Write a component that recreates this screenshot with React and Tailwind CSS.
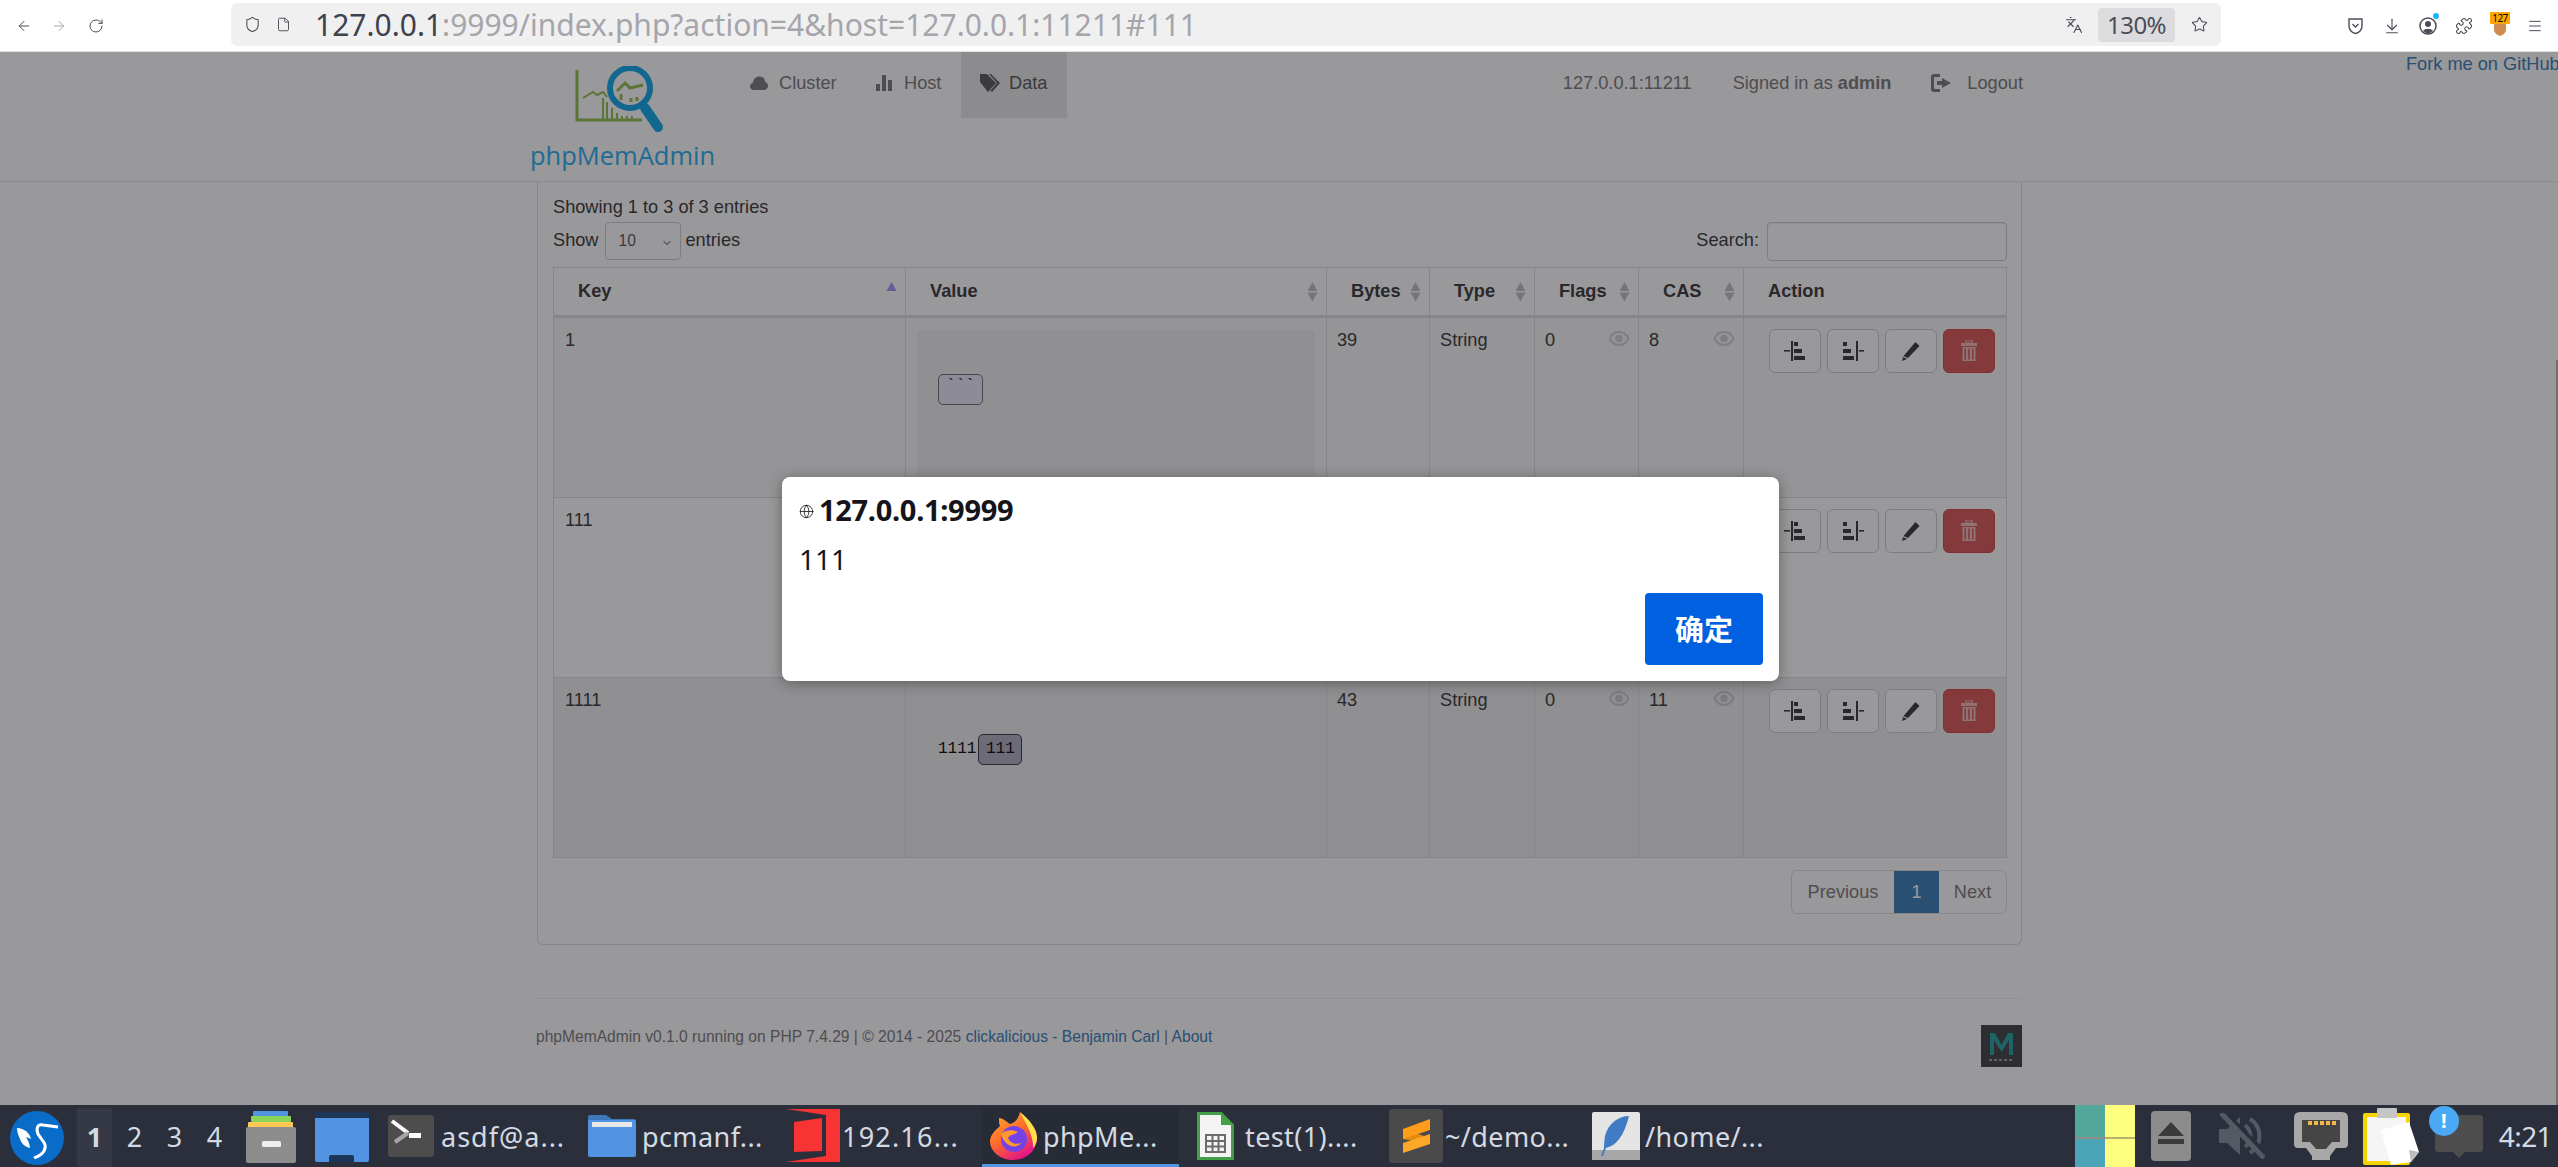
import { ArrowLeft, ArrowRight, RotateCw, Shield, File, Star, Languages, ArrowDownToLine, Puzzle, Menu, ChevronDown, Globe } from "lucide-react";

const sans = "font-['Liberation_Sans',Arial,sans-serif]";
const ui = "font-['Noto_Sans','Noto_Sans_CJK_SC',sans-serif]";

function SortArrows({ active }) {
  return (
    <svg width="11" height="20" viewBox="0 0 11 20" className="shrink-0">
      <path d="M5.5 0 L10.5 9 H0.5 Z" fill={active ? "#9a9aff" : "#bdbdbd"} />
      {!active && <path d="M5.5 19.5 L10.5 10.5 H0.5 Z" fill="#bdbdbd" />}
    </svg>
  );
}

function EyeIcon() {
  return (
    <svg width="20" height="15" viewBox="0 0 20 15" className="shrink-0 opacity-30">
      <path d="M10 1 C5 1 2 4.500 0.500 7.500 C2 10.500 5 14 10 14 C15 14 18 10.500 19.500 7.500 C18 4.500 15 1 10 1 Z" fill="none" stroke="#777" strokeWidth="2" />
      <circle cx="10" cy="7.500" r="3.800" fill="#777" />
    </svg>
  );
}

function AlignLeftIcon() {
  return (
    <svg width="22" height="20" viewBox="0 0 22 20">
      <rect x="7" y="0" width="2" height="20" fill="#333" />
      <rect x="0" y="9" width="6" height="1.600" fill="#333" />
      <rect x="10" y="1" width="4" height="4" fill="#333" />
      <rect x="10" y="8" width="8" height="4" fill="#333" />
      <rect x="10" y="15" width="11" height="4" fill="#333" />
    </svg>
  );
}

function AlignRightIcon() {
  return (
    <svg width="22" height="20" viewBox="0 0 22 20">
      <rect x="14" y="0" width="2" height="20" fill="#333" />
      <rect x="17" y="9" width="5" height="1.600" fill="#333" />
      <rect x="1" y="1" width="4" height="4" fill="#333" />
      <rect x="1" y="8" width="8" height="4" fill="#333" />
      <rect x="1" y="15" width="11" height="4" fill="#333" />
    </svg>
  );
}

function PencilIcon() {
  return (
    <svg width="20" height="20" viewBox="0 0 20 20">
      <path d="M14.500 1 L18.500 5 L7 17 L2.500 15 Z" fill="#333" />
      <path d="M2 16 L6 18 L1 20 Z" fill="#333" />
    </svg>
  );
}

function TrashIcon() {
  return (
    <svg width="18" height="22" viewBox="0 0 18 22" fill="#fff" className="opacity-60">
      <rect x="6" y="0" width="6" height="3" fill="none" stroke="#fff" strokeWidth="1.200" />
      <rect x="1" y="3" width="16" height="3" />
      <path d="M2.500 7 H15.500 V21 H2.500 Z M4.500 8.500 V19.500 H6 V8.500 Z M8.200 8.500 V19.500 H9.800 V8.500 Z M12 8.500 V19.500 H13.500 V8.500 Z" fillRule="evenodd" />
    </svg>
  );
}

function ActionButtons() {
  return (
    <div className="flex gap-[6px]">
      <button className="w-[52px] h-[44px] flex items-center justify-center bg-white border border-[#ccc] rounded-[6px]"><AlignLeftIcon /></button>
      <button className="w-[52px] h-[44px] flex items-center justify-center bg-white border border-[#ccc] rounded-[6px]"><AlignRightIcon /></button>
      <button className="w-[52px] h-[44px] flex items-center justify-center bg-white border border-[#ccc] rounded-[6px]"><PencilIcon /></button>
      <button className="w-[52px] h-[44px] flex items-center justify-center bg-[#d9534f] border border-[#d43f3a] rounded-[6px]"><TrashIcon /></button>
    </div>
  );
}

function Row({ k, bytes, cas, rowBg, preBg, children }) {
  return (
    <tr className={`h-[180px] ${rowBg}`}>
      <td className="border border-[#ddd] align-top pl-[11px] pt-[9px]">{k}</td>
      <td className="border border-[#ddd] align-top p-[11px]">
        <div className={`h-[157px] rounded-[6px] pl-[21px] pt-[45px] ${preBg} font-['Liberation_Mono',monospace] text-[16px] text-black`}>
          {children}
        </div>
      </td>
      <td className="border border-[#ddd] align-top pl-[10px] pt-[9px]">{bytes}</td>
      <td className="border border-[#ddd] align-top pl-[10px] pt-[9px]">String</td>
      <td className="border border-[#ddd] align-top pl-[10px] pr-[9px] pt-[9px]">
        <div className="flex justify-between items-start"><span>0</span><span className="pt-[4px]"><EyeIcon /></span></div>
      </td>
      <td className="border border-[#ddd] align-top pl-[10px] pr-[9px] pt-[9px]">
        <div className="flex justify-between items-start"><span>{cas}</span><span className="pt-[4px]"><EyeIcon /></span></div>
      </td>
      <td className="border border-[#ddd] align-top pl-[25px] pt-[11px]"><ActionButtons /></td>
    </tr>
  );
}

function HeadCell({ label, active, plain }) {
  return (
    <th className="border border-[#ddd] border-b-[3px] text-left font-bold pl-[24px] pr-[8px]">
      <div className="flex justify-between items-center">
        <span className="mt-[-2px]">{label}</span>
        {!plain && <SortArrows active={active} />}
      </div>
    </th>
  );
}

function Logo() {
  return (
    <svg width="96" height="70" viewBox="570 66 96 70" className="self-center ml-[-8px]">
      <path d="M577 70 V120 H642" fill="none" stroke="#8fc04a" strokeWidth="3" />
      <path d="M583 98 L593 92 L597 95 L603 92 L607 97" fill="none" stroke="#8fc04a" strokeWidth="2" />
      <path d="M603 98 V119 M607 102 V119 M612 108 V119 M617 113 V119 M622 116 V119 M627 116 V119 M632 116 V119" stroke="#8fc04a" strokeWidth="2" />
      <path d="M617 91 L625 83 L630 88 L643 85" fill="none" stroke="#8fc04a" strokeWidth="3" />
      <path d="M621 94 V100 M631 98 V102 M637 97 V101" stroke="#8fc04a" strokeWidth="3" />
      <circle cx="630" cy="88" r="20" fill="none" stroke="#0aa6ea" strokeWidth="6" />
      <path d="M645 108 L658 127" stroke="#0aa6ea" strokeWidth="10" strokeLinecap="round" />
    </svg>
  );
}

function Toolbar() {
  return (
    <div className={`h-[52px] shrink-0 bg-white border-b border-[#e0e0e2] flex items-center ${ui}`}>
      <div className="w-[231px] shrink-0 flex items-center pl-[16px] text-[#4a4d57]">
        <ArrowLeft size={16} strokeWidth={1.500} />
        <ArrowRight size={16} strokeWidth={1.500} className="ml-[19px] text-[#a9a9ad]" />
        <RotateCw size={16} strokeWidth={1.500} className="ml-[21px]" />
      </div>
      <div className="w-[1990px] h-[43px] mb-[2px] bg-[#f0f0f1] rounded-[6px] flex items-center text-[#4a4d57]">
        <Shield size={17} strokeWidth={1.500} className="ml-[13px]" />
        <File size={15} strokeWidth={1.500} className="ml-[15px]" />
        <div className="ml-[24px] text-[30px] leading-none whitespace-nowrap">
          <span className="text-[#3f424d]">127.0.0.1</span><span className="text-[#a5a5ab]">:9999/index.php?action=4&amp;host=127.0.0.1:11211#111</span>
        </div>
        <div className="ml-auto flex items-center">
          <Languages size={18} strokeWidth={1.500} />
          <div className="ml-[15px] w-[77px] h-[34px] bg-[#dcdcdf] rounded-[4px] flex items-center justify-center text-[24px] tracking-[-0.5px]">130%</div>
          <Star size={17} strokeWidth={1.500} className="ml-[16px] mr-[13px]" />
        </div>
      </div>
      <div className="flex-1 flex items-center pl-[126px] text-[#4a4d57] relative">
        <svg width="17" height="18" viewBox="0 0 17 18" fill="none" stroke="currentColor" strokeWidth="1.400">
          <path d="M2 2 H15 V9 C15 13 12 16 8.500 16.500 C5 16 2 13 2 9 Z" />
          <path d="M5.500 7 L8.500 10 L11.500 7" />
        </svg>
        <ArrowDownToLine size={18} strokeWidth={1.500} className="ml-[19px]" />
        <div className="relative ml-[18px]">
          <svg width="18" height="20" viewBox="0 0 18 20">
            <circle cx="9" cy="10" r="8" fill="none" stroke="currentColor" strokeWidth="1.500" />
            <circle cx="9" cy="8" r="3" fill="currentColor" />
            <path d="M4 15 C6 12 12 12 14 15 L9 18 Z" fill="currentColor" />
          </svg>
          <span className="absolute top-[-3px] right-[-2px] w-[6px] h-[6px] rounded-full bg-[#12b8ff]" />
        </div>
        <Puzzle size={18} strokeWidth={1.500} className="ml-[18px]" />
        <div className="relative ml-[17px] w-[20px] h-[20px]">
          <svg width="14" height="20" viewBox="0 0 14 20" className="ml-[3px] mt-[4px]"><path d="M1 2 H13 V9 C13 13 10 15 7 16 C4 15 1 13 1 9 Z" fill="#d08a50" /></svg>
          <span className="absolute top-[-4px] left-0 w-[20px] h-[12px] bg-[#ffa500] text-black text-[10px] leading-[12px] text-center tracking-[-0.5px] rounded-[1px]">127</span>
        </div>
        <Menu size={16} strokeWidth={1.500} className="ml-[17px]" />
      </div>
    </div>
  );
}

function TaskText({ children, className }) {
  return <span className={`text-[27px] leading-none whitespace-nowrap text-[#d3dae3] tracking-[0.4px] ${className || ""}`}>{children}</span>;
}

function Taskbar() {
  return (
    <div className={`h-[62px] shrink-0 bg-[#2b2f3b] flex items-stretch pl-[10px] ${ui} overflow-hidden`}>
      {/* start menu */}
      <svg width="54" height="54" viewBox="0 0 54 54" className="self-center mt-[3px] shrink-0">
        <circle cx="27" cy="27" r="27" fill="#0a6cc9" />
        <path d="M48 16 L33 14 C27 13 26 18 28 23 C32 30 38 33 34 40 C31 45 26 46 24 47" fill="none" stroke="#fff" strokeWidth="3" />
        <path d="M7 17 C14 17 20 22 21 28 L16 26 C18 30 20 33 20 37 C15 36 11 32 10 28 C8 24 7 20 7 17 Z" fill="#fff" />
      </svg>
      {/* pager */}
      <div className="ml-[13px] mt-[3px] flex gap-[5px] shrink-0">
        <div className="w-[35px] bg-[#353945] flex items-center justify-center text-[27px] font-bold text-[#d3dae3]">1</div>
        <div className="w-[35px] flex items-center justify-center text-[27px] text-[#d3dae3]">2</div>
        <div className="w-[35px] flex items-center justify-center text-[27px] text-[#d3dae3]">3</div>
        <div className="w-[35px] flex items-center justify-center text-[27px] text-[#d3dae3]">4</div>
      </div>
      {/* file cabinet */}
      <svg width="51" height="54" viewBox="246 1110 51 54" className="ml-[14px] mt-[5px] shrink-0">
        <rect x="253" y="1111" width="35" height="6" rx="1" fill="#5294e2" />
        <rect x="251" y="1116" width="40" height="6" rx="1" fill="#8bd45a" />
        <rect x="248" y="1122" width="45" height="6" rx="1" fill="#ffc857" />
        <rect x="246" y="1127" width="50" height="36" rx="2" fill="#8d8d8d" />
        <rect x="262" y="1141" width="19" height="6" rx="1.500" fill="#eee" />
      </svg>
      {/* tray */}
      <svg width="54" height="50" viewBox="315 1112 54 50" className="ml-[18px] mt-[7px] shrink-0">
        <rect x="315" y="1112" width="54" height="50" rx="2" fill="#5294e2" />
        <rect x="315" y="1112" width="54" height="6" fill="#1d3557" />
        <path d="M329 1162 V1157 Q329 1155 331 1155 H352 Q354 1155 354 1157 V1162 Z" fill="#1d3557" />
      </svg>
      {/* terminal */}
      <div className="ml-[19px] flex items-center shrink-0 w-[180px]">
        <svg width="46" height="42" viewBox="388 1116 46 42" className="shrink-0">
          <rect x="388" y="1116" width="46" height="42" rx="3" fill="#4d4d4d" />
          <path d="M392 1122 L408 1134" stroke="#fff" strokeWidth="4" fill="none" />
          <path d="M408 1134 L395 1143" stroke="#a5a5a5" strokeWidth="4" fill="none" />
          <rect x="409" y="1134" width="12" height="5" fill="#fff" />
        </svg>
        <TaskText className="ml-[7px] tracking-[1px]">asdf@a...</TaskText>
      </div>
      {/* pcmanfm */}
      <div className="ml-[20px] flex items-center shrink-0 w-[179px]">
        <svg width="48" height="42" viewBox="588 1116 48 42" className="shrink-0">
          <path d="M588 1118 Q588 1116 590 1116 H606 L612 1120 H634 Q636 1120 636 1122 V1130 H588 Z" fill="#3f77bb" />
          <rect x="588" y="1121" width="48" height="37" rx="2" fill="#5294e2" />
          <rect x="592" y="1123" width="40" height="5" fill="#e8e8e8" />
        </svg>
        <TaskText className="ml-[6px]">pcmanf...</TaskText>
      </div>
      {/* red door */}
      <div className="ml-[19px] flex items-center shrink-0 w-[176px]">
        <svg width="54" height="54" viewBox="786 1110 54 54" className="shrink-0">
          <path d="M786 1110 H840 V1163 H786 L826 1157 V1116 Z" fill="#f73333" />
          <path d="M794 1123 L822 1119 V1152 L794 1153 Z" fill="#f73333" />
        </svg>
        <TaskText className="ml-[2px] tracking-[1.2px]">192.16...</TaskText>
      </div>
      {/* firefox, active */}
      <div className="ml-[20px] w-[197px] mt-[3px] bg-[#272b36] border-b-[3px] border-[#5294e2] flex items-center pl-[8px] shrink-0">
        <svg width="47" height="48" viewBox="0 0 47 48" className="shrink-0">
          <defs>
            <linearGradient id="ffa" x1="0" y1="0" x2="0.600" y2="1">
              <stop offset="0" stopColor="#ffb02e" />
              <stop offset="0.550" stopColor="#ff6a2a" />
              <stop offset="1" stopColor="#e31587" />
            </linearGradient>
          </defs>
          <path d="M30 0 C28 7 26 10 20 12 C16 9 12 6 9 6 C9 10 9 12 10 14 C3 20 0 25 0 29 C0 40 11 48 23 48 C36 48 47 39 47 26 C47 14 36 10 30 0 Z" fill="url(#ffa)" />
          <path d="M30 0 C40 8 47 17 47 26 C47 30 45 34 43 36 C44 24 36 12 30 0 Z" fill="#ffe14d" />
          <circle cx="24" cy="27" r="13" fill="#7542e5" />
          <path d="M11 22 C15 18 22 17 28 20 C24 23 20 22 18 26 C20 31 26 33 31 31 C27 37 15 36 11 22 Z" fill="#ff9a2e" />
        </svg>
        <TaskText className="ml-[6px]">phpMe...</TaskText>
      </div>
      {/* calc */}
      <div className="ml-[18px] flex items-center shrink-0 w-[180px]">
        <svg width="37" height="48" viewBox="0 0 37 48" className="shrink-0">
          <path d="M1.500 1.500 H24 L35.500 13 V46.500 H1.500 Z" fill="#f4f4f4" stroke="#43a047" strokeWidth="3" />
          <path d="M24 1.500 L35.500 13 H24 Z" fill="#43a047" />
          <path d="M9 23 H28 V40 H9 Z M9 29 H28 M9 34.500 H28 M15.500 23 V40 M21.500 23 V40" fill="none" stroke="#6b6b6b" strokeWidth="2" />
        </svg>
        <TaskText className="ml-[11px]">test(1)....</TaskText>
      </div>
      {/* sublime */}
      <div className="ml-[12px] flex items-center shrink-0 w-[195px]">
        <svg width="54" height="54" viewBox="0 0 54 54" className="shrink-0">
          <rect width="54" height="54" rx="4" fill="#4a4a4a" />
          <path d="M14 20 L41 29 V35 L14 30 Z" fill="#e58a12" />
          <path d="M41 10 V21 L14 30 V20 Z" fill="#ff9c1a" />
          <path d="M14 34 L41 25 V35 L14 44 Z" fill="#ffa726" />
        </svg>
        <TaskText className="ml-[2px]">~/demo...</TaskText>
      </div>
      {/* leafpad */}
      <div className="ml-[8px] flex items-center shrink-0">
        <svg width="48" height="48" viewBox="0 0 48 48" className="shrink-0">
          <rect width="48" height="48" rx="2" fill="#e4e4e4" />
          <rect y="38" width="48" height="10" fill="#a7a7a7" />
          <path d="M37 4 C26 4 16 12 13 24 C12 30 12 34 12 36 L9 44 L11 44 L14 36 C24 34 32 24 37 4 Z" fill="#3f7cc4" />
        </svg>
        <TaskText className="ml-[5px]">/home/...</TaskText>
      </div>
      {/* tray */}
      <div className="ml-auto flex shrink-0 items-stretch">
        <div className="flex">
          <div className="w-[30px] flex flex-col">
            <div className="h-[32px] bg-[#54a89b]" />
            <div className="flex-1 bg-[#4ba4b8] border-t-[2px] border-[#8f8f88]" />
          </div>
          <div className="w-[30px] flex flex-col">
            <div className="h-[32px] bg-[#ffff7f]" />
            <div className="flex-1 bg-[#ffff7f] border-t-[2px] border-[#b3b36c]" />
          </div>
        </div>
        <svg width="40" height="50" viewBox="0 0 40 50" className="ml-[16px] self-center shrink-0">
          <rect width="40" height="50" rx="4" fill="#8c8c8c" />
          <path d="M20 11 L33 25 H7 Z M7 28 H33 V33 H7 Z" fill="#3a3a3a" />
        </svg>
        <svg width="46" height="46" viewBox="0 0 46 46" className="ml-[28px] self-center shrink-0">
          <path d="M0 16 H8 L21 4 V42 L8 30 H0 Z" fill="#555963" />
          <path d="M26 12 A14 14 0 0 1 26 34 M31 6 A20 20 0 0 1 31 40" fill="none" stroke="#555963" strokeWidth="4" />
          <path d="M5 -2 L48 42" stroke="#2b2f3b" strokeWidth="4" />
          <path d="M2 0 L45 45" stroke="#555963" strokeWidth="5" />
        </svg>
        <svg width="54" height="48" viewBox="0 0 54 48" className="ml-[29px] self-center shrink-0">
          <path d="M6 0 H48 Q54 0 54 6 V32 Q54 36 50 36 H42 L36 44 L36 48 H18 L18 44 L12 36 H4 Q0 36 0 32 V6 Q0 0 6 0 Z" fill="#a8a8a8" />
          <path d="M8 8 H46 V30 H38 L32 37 H22 L16 30 H8 Z" fill="#454545" />
          <path d="M14 9 H18 V13 H14 Z M20 9 H24 V13 H20 Z M26 9 H30 V13 H26 Z M32 9 H36 V13 H32 Z M38 9 H42 V13 H38 Z" fill="#f2b84b" />
        </svg>
        <svg width="56" height="60" viewBox="0 0 56 60" className="ml-[15px] self-center shrink-0">
          <rect x="0" y="7" width="47" height="52" rx="2" fill="#f5d400" />
          <rect x="4" y="11" width="39" height="44" fill="#f5f5f5" />
          <rect x="14" y="2" width="20" height="10" rx="1" fill="#c5c5c5" />
          <path d="M18 24 L46 16 L56 46 L48 56 L28 59 Z" fill="#fff" />
          <path d="M48 56 L56 46 L46 44 Z" fill="#bdbdbd" />
        </svg>
        <div className="relative ml-[16px] self-center">
          <svg width="48" height="44" viewBox="0 0 48 44" className="shrink-0 mt-[2px]">
            <path d="M3 0 H45 Q48 0 48 3 V34 Q48 37 45 37 H30 L24 43 L18 37 H3 Q0 37 0 34 V3 Q0 0 3 0 Z" fill="#4d4d4d" />
          </svg>
          <div className="absolute top-[-7px] left-[-6px] w-[30px] h-[30px] rounded-full bg-[#4aa8f5] flex items-center justify-center text-white text-[20px] font-bold leading-none">!</div>
        </div>
        <span className="ml-[16px] mr-[6px] self-center text-[28px] leading-none text-[#d3dae3] tracking-[-0.6px]">4:21</span>
      </div>
    </div>
  );
}

function AlertDialog() {
  return (
    <div className={`absolute top-[425px] left-[782px] w-[997px] h-[204px] bg-white rounded-[8px] shadow-[0_2px_14px_rgba(0,0,0,0.35)] z-20 pl-[17px] pr-[16px] pt-[14px] pb-[16px] flex flex-col text-[#15141a] ${ui}`}>
      <div className="flex items-center h-[36px]">
        <Globe size={15} strokeWidth={1.300} className="mt-[5px]" />
        <span className="ml-[5px] text-[29px] font-bold leading-none tracking-[-0.3px]">127.0.0.1:9999</span>
      </div>
      <div className="mt-[18px] text-[28px] leading-none">111</div>
      <div className="mt-auto flex justify-end">
        <button className="w-[118px] h-[72px] bg-[#0060df] text-white rounded-[4px] text-[29px] font-bold font-['Noto_Sans_CJK_SC',sans-serif]">确定</button>
      </div>
    </div>
  );
}

function PageContent() {
  return (
    <div className={`${sans} text-[18.2px] leading-[26px] text-[#333]`}>
      <div className="h-[130px] border-b border-[#e7e7e7]">
        <div className="ml-[537px] w-[1485px] flex">
          <div className="w-[184px] ml-[-7px] flex flex-col pt-[14px]">
            <Logo />
            <div className="mt-[3px] font-['Open_Sans',sans-serif] font-medium text-[25.5px] leading-[32px] text-[#22aef0] whitespace-nowrap">phpMemAdmin</div>
          </div>
          <div className="ml-[16px] flex h-[66px] text-[#777]">
            <div className="w-[126px] pl-[20px] flex items-center pb-[4px]">
              <svg width="18" height="14" viewBox="0 0 18 14" fill="currentColor" className="shrink-0"><path d="M4 14 C1.500 14 0 12.300 0 10.300 C0 8.500 1.200 7 3 6.700 C3.300 3 6 0.500 9.500 0.500 C13 0.500 15 3 15.300 6 C17 6.500 18 8 18 10 C18 12.300 16.300 14 14 14 Z" /></svg>
              <span className="ml-[11px]">Cluster</span>
            </div>
            <div className="w-[105px] pl-[20px] flex items-center pb-[4px]">
              <svg width="16" height="16" viewBox="0 0 16 16" fill="currentColor" className="shrink-0"><path d="M0 9 H4 V16 H0 Z M6 0 H10 V16 H6 Z M12 5 H16 V16 H12 Z" /></svg>
              <span className="ml-[12px]">Host</span>
            </div>
            <div className="w-[106px] pl-[19px] flex items-center pb-[4px] bg-[#e7e7e7] text-[#555]">
              <svg width="20" height="18" viewBox="0 0 20 18" fill="currentColor" className="shrink-0"><path d="M0 0 H7 L16 9 L8 18 L0 8 Z M9 0 H11 L20 9 L12 18 L10.500 16.500 L17 9 Z" /></svg>
              <span className="ml-[9px]">Data</span>
            </div>
          </div>
          <div className="ml-auto mr-[-1px] flex h-[66px] items-center pb-[4px] text-[#777]">
            <span>127.0.0.1:11211</span>
            <span className="ml-[41px]">Signed in as <b>admin</b></span>
            <svg width="20" height="18" viewBox="0 0 20 18" fill="currentColor" className="ml-[40px] shrink-0"><path d="M9 0 H3 Q0 0 0 3 V15 Q0 18 3 18 H9 V15 H4 Q3 15 3 14 V4 Q3 3 4 3 H9 Z M11 4 L20 9 L11 14 V11 H6 V7 H11 Z" /></svg>
            <span className="ml-[16px]">Logout</span>
          </div>
        </div>
      </div>

      <div className="ml-[537px] w-[1485px] h-[763px] border border-t-0 border-[#ddd] rounded-b-[6px] pl-[15px] pr-[15px]">
        <div className="pt-[12px] h-[39px]">Showing 1 to 3 of 3 entries</div>
        <div className="flex items-start h-[46px] pt-[1px]">
          <span className="pt-[5px]">Show</span>
          <div className="ml-[6px] w-[76px] h-[38px] border border-[#ccc] rounded-[4px] bg-white flex items-center justify-between pl-[13px] pr-[7px] text-[15.6px] text-[#555]">
            10<ChevronDown size={12} strokeWidth={2} className="text-[#222] mt-[3px]" />
          </div>
          <span className="ml-[5px] pt-[5px]">entries</span>
          <span className="ml-auto pt-[5px]">Search:</span>
          <div className="ml-[8px] w-[240px] h-[39px] border border-[#ccc] rounded-[4px] bg-white shadow-[inset_0_1px_1px_rgba(0,0,0,0.075)] mr-[-1px]" />
        </div>
        <table className="w-[1453px] table-fixed border-collapse">
          <colgroup>
            <col className="w-[352px]" />
            <col className="w-[421px]" />
            <col className="w-[103px]" />
            <col className="w-[105px]" />
            <col className="w-[104px]" />
            <col className="w-[105px]" />
            <col className="w-[263px]" />
          </colgroup>
          <thead>
            <tr className="h-[49px]">
              <HeadCell label="Key" active />
              <HeadCell label="Value" />
              <HeadCell label="Bytes" />
              <HeadCell label="Type" />
              <HeadCell label="Flags" />
              <HeadCell label="CAS" />
              <HeadCell label="Action" plain />
            </tr>
          </thead>
          <tbody>
            <Row k="1" bytes="39" cas="8" rowBg="bg-[#f7f7f7]" preBg="bg-[#efefef]">
              <span className="inline-block w-[45px] h-[31px] align-top rounded-[5px] border border-[#6a6a78] bg-[#e9e8f5] text-center leading-[22px]">```</span>
            </Row>
            <Row k="111" bytes="41" cas="9" rowBg="bg-white" preBg="bg-[#efefef]" />
            <Row k="1111" bytes="43" cas="11" rowBg="bg-[#efefef]" preBg="bg-[#efefef]">
              <span className="inline-block leading-[31px] align-top">1111</span>
              <span className="inline-block ml-[2px] w-[44px] h-[31px] align-top rounded-[5px] border border-[#33333d] bg-[#aeadbd] text-center leading-[29px]">111</span>
            </Row>
          </tbody>
        </table>
        <div className="mt-[12px] flex justify-end mr-[-1px]">
          <div className="h-[44px] flex border border-[#ddd] rounded-[6px] bg-white text-[#777] overflow-hidden">
            <span className="w-[102px] flex items-center justify-center">Previous</span>
            <span className="w-[45px] flex items-center justify-center bg-[#337ab7] text-white">1</span>
            <span className="w-[67px] flex items-center justify-center">Next</span>
          </div>
        </div>
      </div>

      <div className="ml-[537px] w-[1485px] mt-[53px] border-t border-[#eee] pt-[26px] flex justify-between text-[15.6px] leading-[24px] text-[#777]">
        <div className="ml-[-1px]">
          phpMemAdmin v0.1.0 running on PHP 7.4.29 | © 2014 - 2025 <span className="text-[#337ab7]">clickalicious - Benjamin Carl</span> | <span className="text-[#337ab7]">About</span>
        </div>
        <svg width="41" height="42" viewBox="0 0 41 42" className="shrink-0">
          <rect width="41" height="42" fill="#3d3d3f" />
          <path d="M9 30 V8 L14 8 L20.500 20 L27 8 L32 8 V30 H28 V15 L20.500 27 L13 15 V30 Z" fill="#1fa0a0" />
          <path d="M8 35 H33" stroke="#999" strokeWidth="2" strokeDasharray="3 2" />
        </svg>
      </div>
    </div>
  );
}

export default function App() {
  return (
    <div className="h-[1167px] w-full flex flex-col overflow-hidden bg-white">
      <Toolbar />
      <div className="relative flex-1 overflow-hidden">
        <PageContent />
        <span className={`absolute top-[-1px] left-[2406px] ${sans} text-[18.2px] leading-[26px] text-[#337ab7] whitespace-nowrap`}>Fork me on GitHub</span>
        <div className="absolute inset-0 bg-[rgba(28,27,34,0.45)] z-10" />
        <div className="absolute right-0 top-[308px] bottom-0 w-[2px] bg-[#6e6e70] z-10" />
        <AlertDialog />
      </div>
      <Taskbar />
    </div>
  );
}
